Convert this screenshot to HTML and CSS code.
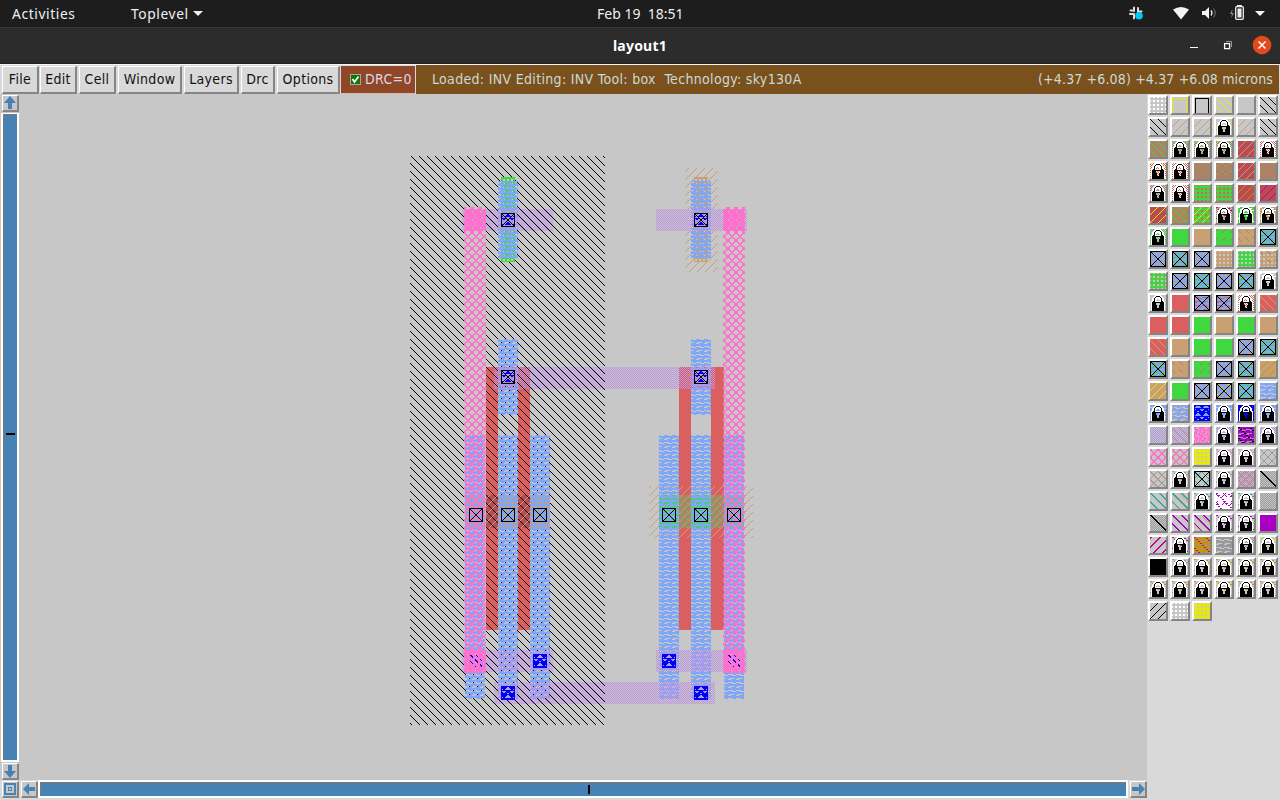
FILE: index.html
```
<!DOCTYPE html>
<html lang="en">
<head>
<meta charset="utf-8">
<title>layout1</title>
<link rel="stylesheet" href="styles.css">
</head>
<body>
<header class="topbar">
  <span class="activities">Activities</span>
  <span class="appname">Toplevel <svg width="10" height="6"><path d="M0 0h10l-5 5z" fill="#f0f0f0"/></svg></span>
  <span class="clock">Feb 19&nbsp; 18:51</span>
  <svg class="tray" width="152" height="27" viewBox="1128 0 152 27">
    <g stroke="#ddd" stroke-width="2" stroke-linecap="round"><path d="M1130.500 10.500h3M1134 7.500v3.500M1138 8v4M1138 11.500h3.500M1130 14h4M1134 15v3.500"/></g>
    <circle cx="1139" cy="15.700" r="3.800" fill="#00c8f5"/>
    <path d="M1173 9.500q8-5 16 0l-8 10z" fill="#f4f4f4"/>
    <path d="M1202 11h3l4-4v12l-4-4h-3z" fill="#f4f4f4"/>
    <path d="M1211 10.500q2 2.500 0 5" fill="none" stroke="#eee" stroke-width="1.300"/>
    <path d="M1213.500 8.500q3.500 4.500 0 9" fill="none" stroke="#777"/>
    <path d="M1232.500 9l-2.500 5h2l-1 4 3-5h-2z" fill="#888"/>
    <path d="M1237 5h5v2h-5z" fill="#eee"/><rect x="1235.700" y="6.700" width="7.600" height="12.600" rx="1" fill="none" stroke="#eee" stroke-width="1.300"/>
    <path d="M1237.500 8.500h4v9h-4z" fill="#eee"/>
    <path d="M1255 11h10l-5 5z" fill="#f4f4f4"/>
  </svg>
</header>
<div class="titlebar">
  <span class="title">layout1</span>
  <svg class="controls" width="100" height="36" viewBox="1180 28 100 36">
    <path d="M1190 47.500h8" stroke="#fff"/>
    <path d="M1226 41.500h5.500v5.500" fill="none" stroke="#999"/><rect x="1224.600" y="43.600" width="5" height="5" fill="none" stroke="#fff" stroke-width="1.300"/>
    <circle cx="1262" cy="45" r="9.300" fill="#e24a1b"/><path d="M1258.500 41.500l7 7m0-7l-7 7" stroke="#fff" stroke-width="1.500"/>
  </svg>
</div>
<nav class="menubar">
  <span class="menu file">File</span><span class="menu edit">Edit</span><span class="menu cell">Cell</span><span class="menu window">Window</span><span class="menu layers">Layers</span><span class="menu drc">Drc</span><span class="menu options">Options</span>
  <span class="check"><svg width="11" height="11"><path d="M0 0h11v11H0z" fill="#b9a28c"/><path d="M1 1h9v9H1z" fill="#087a10"/><path d="M2.500 5l2 3 4-5.500" fill="none" stroke="#fff" stroke-width="1.700"/></svg><span class="drctext">DRC=0</span></span>
  <div class="status"><span class="loaded">Loaded: INV Editing: INV Tool: box&nbsp; Technology: sky130A</span><span class="coords">(+4.37 +6.08) +4.37 +6.08 microns</span></div>
</nav>
<main class="workspace">
  <div class="viewer">
    <div class="vscroll">
      <span class="arrow"><svg width="14" height="13"><path d="M7 0l6 7H9v6H5V7H1z"/></svg></span>
      <div class="vtrack"><i class="vmark"></i></div>
      <span class="arrow"><svg width="14" height="14"><path d="M7 14L1 7h4V1h4v6h4z"/></svg></span>
    </div>
    <canvas class="layout" id="layout" width="1127" height="686"></canvas>
    <div class="hscroll">
      <span class="arrow"><svg width="14" height="14"><path fill-rule="evenodd" d="M1 1h12v12H1zM3 3v8h8V3zM5 5h4v4H5zM6 6v2h2V6z"/></svg></span>
      <span class="arrow"><svg width="14" height="14"><path d="M1 7l6-6v4h6v4H7v4z"/></svg></span>
      <div class="htrack"><i class="hmark"></i></div>
      <span class="arrow"><svg width="14" height="14"><path d="M14 7L8 1v4H1v4h7v4z"/></svg></span>
    </div>
  </div>
  <aside class="side"><div class="palette" id="palette"></div></aside>
</main>
<script src="draw.js"></script>
</body>
</html>
```
FILE: styles.css
```
* { box-sizing: border-box; }
body { margin: 0; width: 1280px; height: 800px; overflow: hidden; background: #d9d9d9; font-family: "Noto Sans", sans-serif; display: flex; flex-direction: column; }
svg, canvas { display: block; flex: none; }
.topbar { height: 28px; background: #1d1d1d; border-bottom: 1px solid #3a3a3a; color: #f0f0f0; font-size: 14px; display: grid; grid-template-columns: 131px 466px 531px 152px; align-items: center; white-space: nowrap; line-height: 27px; }
.activities { padding-left: 12px; letter-spacing: .6px; }
.appname { display: flex; align-items: center; gap: 4px; letter-spacing: .6px; }
.activities, .appname { font-size: 13.8px; }
.titlebar { height: 36px; background: #2c2c2c; border-bottom: 1px solid #222; display: grid; grid-template-columns: 613px 567px 100px; color: #fff; font-weight: bold; font-size: 14px; line-height: 35px; }
.title { grid-column: 2; letter-spacing: .2px; }
.menubar { height: 30px; border-top: 1px solid #f4f4f4; display: flex; padding-left: 2px; font: 14px "DejaVu Sans Condensed", "DejaVu Sans", sans-serif; font-stretch: condensed; letter-spacing: .32px; color: #111; white-space: nowrap; }
.menu { height: 28px; margin: 1px 2px 0 0; background: #d9d9d9; border: 1px solid #fff; border-right: 2px solid #858585; border-bottom: 2px solid #858585; text-align: center; line-height: 25px; flex: none; }
.file, .edit, .cell { width: 37px; }
.file { margin-right: 1px; }
.window { width: 64px; }
.layers { width: 55px; }
.drc { width: 34px; }
.options { width: 63px; margin-right: 1px; }
.check { width: 75px; height: 28px; margin-top: 1px; background: #8f4728; border-bottom: 1px solid #d9b9a5; color: #ddd6e6; display: flex; align-items: center; gap: 4px; padding: 0 0 1px 9px; flex: none; }
.status { flex: 1; margin: 0 1px 0 -1px; border-left: 1px solid #d9d9d9; background: #7a511d; color: #cbd9d5; display: flex; justify-content: space-between; padding: 0 6px 0 16px; line-height: 28px; }
.coords { letter-spacing: .15px; }
.workspace { height: 706px; display: flex; }
.viewer { width: 1147px; display: grid; grid-template-columns: 20px 1127px; grid-template-rows: 686px 20px; background: #c7c7c7; }
.vscroll { display: flex; flex-direction: column; align-items: flex-start; padding: 1px 0 0 1px; gap: 1px; }
.arrow { width: 17px; height: 17px; border: 1px solid #fff; border-right: 2px solid #858585; border-bottom: 2px solid #858585; background: #c7c7c7; fill: #4682b4; flex: none; }
.vscroll .arrow { margin-left: 1px; }
.vtrack { width: 18px; height: 649px; background: #4682b4; border: 2px solid #fff; border-top-width: 1px; box-shadow: inset 1px 1px #80776f; display: flex; align-items: center; justify-content: center; }
.vmark { width: 9px; height: 2px; background: #000; margin-top: -6px; }
.hscroll { grid-column: 1 / 3; background: #d9d9d9; display: flex; align-items: flex-start; gap: 2px; padding: 1px 0 0 2px; }
.htrack { width: 1090px; height: 18px; margin: -1px 0 0 -2px; border: 2px solid #fff; background: #4682b4; box-shadow: inset 1px 1px #80776f; display: flex; align-items: center; justify-content: center; }
.hmark { width: 2px; height: 9px; background: #000; margin-left: 11px; }
.side { width: 133px; background: #d9d9d9; padding: 1px; }
.palette { display: grid; grid-template-columns: repeat(6, 20px); grid-auto-rows: 20px; gap: 2px; }
.swatch { width: 20px; height: 20px; border: 2px solid #fff; border-right-color: #858585; border-bottom-color: #858585; background: #c7c7c7; }
```
FILE: draw.js
```
const colors = { r:'#db5f5f', g:'#40d740', t:'#c9a074', n:'#ab8366', m:'#b94b54', b:'#7fa6f7', y:'#eaea00', k:'#000', w:'#fff', c:'#c7c7c7', p:'#ff70cc', v:'#b196df', q:'#2faaa2', z:'#ca0096', u:'#a500c8', a:'#999', o:'#c89400', e:'#0000f5', h:'#be94e2' };
const lattice = ['##....##','##....##','.##..##.','..####..','...##...','..####..','.##..##.','##....##'];
const waves = ['########','########','.....###','####....','########','########','#.....##','...#####'];
const dense = ['####.###','##..####','#####.##','.#######','.###.###','####.###','###.##.#','#.######'];
const peaks = ['...##...','..####..','.######.','........','##....##','#......#','...##...','........'];
const lock = [
  '.....wwwwww.....','....wwkkkkww....','...wwkwwwwkww...','..wwkwwwwwwkww..',
  '..wwkww..wwkww..','..wwkw....wkww..','.wwkkwwwwwwkkww.','.wkkkkkkkkkkkkw.',
  '.wkkkk....kkkkw.','.wkkkk....kkkkw.','.wkkkkk..kkkkkw.','.wkkkkk..kkkkkw.',
  '.wkkkkk..kkkkkw.','.wkkkkkkkkkkkkw.','.wkkkkkkkkkkkkw.','.wkkkkkkkkkkkkw.'];
// Pixel tests for every stipple, keyed by the letter used in the tables below.
const stipple = {
  f: () => true,
  d: (x, y) => (x - y + 800) % 8 === 0,
  i: (x, y) => (x - y + 800) % 8 === 7,
  u: (x, y) => (x + y) % 8 === 7,
  j: (x, y) => (x + y) % 8 === 0,
  T: (x, y) => (x - y + 81) % 9 < 2,
  U: (x, y) => (x + y) % 9 < 2,
  s: (x, y) => (x - y + 81) % 8 === 0 && y % 8 < 4,
  h: (x, y) => (x + y) % 8 === 1 && y % 8 < 4,
  D: (x, y) => (x + 1) % 4 < 2 && (y + 1) % 4 < 2,
  k: (x, y) => (x + y) % 2 === 0,
  n: (x, y) => (x + y) % 2 === 1,
  N: (x, y) => ((x >> 1) * 5 + y * 3) % 11 === 0,
  p: (x, y) => lattice[y % 8][x % 8] === '#',
  P: (x, y) => dense[y % 8][x % 8] === '#',
  W: (x, y) => waves[y % 8][x % 8] === '#',
  l: (x, y) => waves[y % 8][x % 8] === '.',
  Q: (x, y) => peaks[y % 8][x % 8] === '#',
  b: (x, y) => (y === 1 && x > 0 && x < 15) || (y > 0 && (x === 1 || x === 14)),
  O: (x, y) => x === 0 || y === 0 || x === 15 || y === 15,
  X: (x, y) => x === 0 || y === 0 || x === 15 || y === 15 || x === y || x + y === 15,
  S: (x, y) => x === y || x === y + 1
};
function fill(ctx, test, color, x1, y1, x2, y2) {
  ctx.fillStyle = color;
  for (let y = y1; y < y2; y++) {
    for (let x = x1; x < x2; x++) {
      if (!test(x, y)) continue;
      const start = x;
      while (x < x2 && test(x, y)) x++;
      ctx.fillRect(start, y, x - start, 1);
    }
  }
}
const rows = [
 'Dw|by|bk|iy|fc|dk','dk|ut|ut|uy L|ut|dk','fn ig|nn Ng L|nn Ng L|nn Ng L|fm ut|fw nr L',
 'fw nr Ny L|fw nr L|fn|fn sg hr|fm ut|fn hr','nn L|fw nr L|fg Dr|fg Dr sn|fm uo|fm uz',
 'fm uy|fn uo ig|fg Dr uy|nn Nz L|fg Nw L|ft Nw L','ng L|fg|ft|fg hr|ft sn|fb lg Xk',
 'fb lt Xk|fb lg Nr Xk|fb lt Xk|ft Dc|fg Dc|ft Dc sn','fg Dc hr|fb lt Xk|fb lg Xk|fb lt Xk|fb lg Nr Xk|Nw L',
 'L|fr|fb lr Xk|fb lr Nt Xk|fw nr L|fr it','fr|fr|fg|ft|fg|ft','fr it|ft|fg|fg|fb lt Xk|fb lg Xk',
 'fb lg Nr Xk|ft sn|fg hr|fb lt Xk|fb lg Nr Xk|ft uo','ft uy|fg|fb lt Xk|fb lt Ny Xk|fb lg Xk|Wb',
 'Wb L|Wb it|fe Qb Oe|Wb L|fe L|Wb L','kv|kv it|Pp|nv L|fu la Nk|nv L',
 'pp|pp it|fy Dc|Np L|Np L|ua da','ua da it|Na L|iq uq Xk|Na L|ka ip up|ka Sk',
 'Tq|Tq it|Nq L|fw sc su hu Nu|Nq L|ka','ka Sk|Tu|Tu it|Nu L|Nu L|fu Nw Nz',
 'Uz|Nz L|fo Da Nz|fa lc|ka L|Ny L','fk|Na L|No L|No L|No L|No L','No L|No L|No L|No L|No L|No L','uk|Dw|fy Dc'];
const palette = document.getElementById('palette');
rows.join('|').split('|').forEach(spec => {
  const box = document.createElement('div');
  box.className = 'swatch';
  const canvas = document.createElement('canvas');
  canvas.width = canvas.height = 16;
  box.appendChild(canvas);
  const ctx = canvas.getContext('2d');
  for (const token of spec.split(' ')) {
    if (token === 'L') {
      fill(ctx, (x, y) => lock[y][x] === 'w', '#fff', 0, 0, 16, 16);
      fill(ctx, (x, y) => lock[y][x] === 'k', '#000', 0, 0, 16, 16);
    } else {
      fill(ctx, stipple[token[0]], colors[token[1]], 0, 0, 16, 16);
    }
  }
  palette.appendChild(box);
});

const view = document.getElementById('layout').getContext('2d');
view.translate(-20, -94);
function area(code, x1, y1, x2, y2) {
  fill(view, stipple[code[0]], colors[code[1]], x1, y1, x2, y2);
}
// poly
[[486,367,498,630],[518,367,530,630],[498,367,518,389],[679,367,691,630],[711,367,724,630],[691,367,711,389]].forEach(r => area('fr', ...r));
// transistor gates
[[486,495,498,528],[518,495,530,528]].forEach(r => { area('fm', ...r); area('jt', ...r); });
[[679,495,691,528],[711,495,724,528]].forEach(r => { area('fn', ...r); area('dg', ...r); });
// wells and implants
area('ik', 410, 156, 605, 725);
area('jt', 685, 168, 718, 272);
area('jt', 649, 486, 753, 538);
// taps
area('fg', 501, 177, 515, 262);
area('ft', 694, 177, 708, 262);
area('Dc', 501, 177, 515, 262);
area('Dc', 694, 177, 708, 262);
// diffusion under the local interconnect
[[465,495,485,528],[498,495,518,528],[530,495,550,528]].forEach(r => area('lt', ...r));
[[659,495,679,528],[691,495,711,528],[724,495,744,528]].forEach(r => area('fg', ...r));
// local interconnect
[[498,181,518,258],[691,181,711,258],[498,339,518,415],[691,339,711,415],
 [465,435,485,699],[498,435,518,699],[530,435,550,699],
 [659,435,679,699],[691,435,711,699],[724,435,744,699]].forEach(r => area('Wb', ...r));
// metal 1
[[462,209,553,231],[656,209,747,231],[494,367,715,389],[462,650,553,672],[656,650,747,672],[494,682,715,704]].forEach(r => area('kh', ...r));
// metal 2
[[464,207,486,673],[723,207,745,673]].forEach(r => area('pp', ...r));
[[464,209,486,231],[723,209,745,231],[464,650,486,673],[723,650,745,673]].forEach(r => area('Pp', ...r));
function contact(x, y, line, filled, cross) {
  if (filled) {
    const base = cross ? colors.v : colors.e;
    fill(view, stipple.f, base, x, y, x + 14, y + 14);
    fill(view, (a, b) => stipple.Q(a - x + 5, b - y + 7), cross ? colors.e : '#a9a0ea', x + 1, y + 1, x + 13, y + 13);
  }
  fill(view, (a, b) => {
    a -= x; b -= y;
    return a === 0 || b === 0 || a === 13 || b === 13 || (cross && (a === b || a + b === 13));
  }, line, x, y, x + 14, y + 14);
}
[[501,213],[694,213],[501,370],[694,370]].forEach(([x, y]) => contact(x, y, '#000', true, true));
[[469,508],[501,508],[533,508],[662,508],[694,508],[727,508]].forEach(([x, y]) => contact(x, y, '#000', false, true));
[[533,654],[662,654],[501,686],[694,686]].forEach(([x, y]) => contact(x, y, colors.e, true, false));
[[470,655],[728,655]].forEach(([x, y]) => fill(view, (a, b) => {
  const k = (a - x) - (b - y);
  return (k === 0 || k === 1 || k === 6 || k === -6) && (a - x) % 5 < 3;
}, colors.e, x, y, x + 12, y + 12));
```
